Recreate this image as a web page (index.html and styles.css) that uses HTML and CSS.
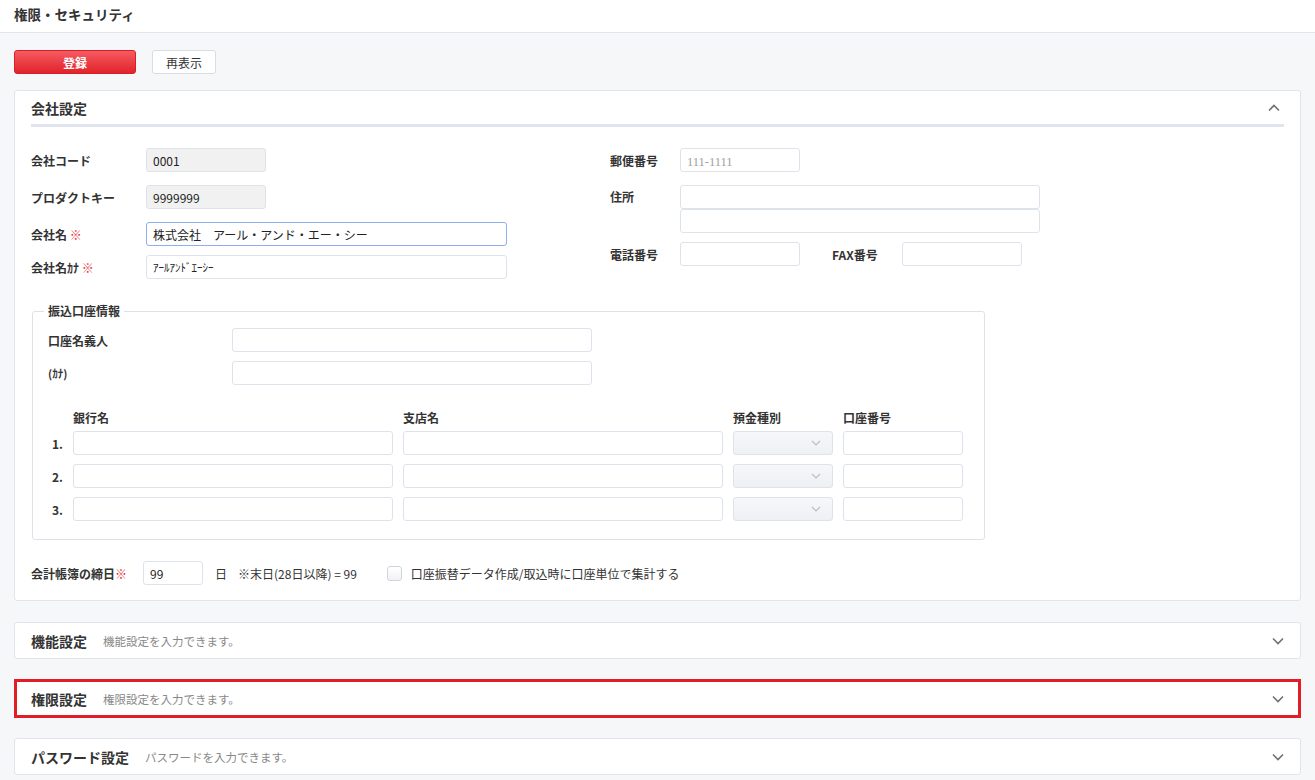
FILE: index.html
```html
<!DOCTYPE html>
<html lang="ja">
<head>
    <meta charset="UTF-8">
    <meta name="viewport" content="width=device-width, initial-scale=1.0">
    <title>権限・セキュリティ</title>
    <link rel="stylesheet" href="styles.css">
</head>
<body>
    <header class="page-header">権限・セキュリティ</header>

    <main class="content">
        <div class="toolbar">
            <button class="btn btn-primary">登録</button>
            <button class="btn btn-secondary">再表示</button>
        </div>

        <!-- 会社設定 -->
        <section class="card card-open">
            <div class="card-head">
                <h2 class="card-title">会社設定</h2>
                <svg class="chevron" width="12" height="8" viewBox="0 0 12 8"><path d="M1 6.5 6 1.5 11 6.5" /></svg>
            </div>

            <div class="card-body">
                <div class="company-grid">
                    <div class="col-left">
                        <div class="field-row">
                            <label class="label label-left">会社コード</label>
                            <input class="input input-s is-disabled" type="text" value="0001" readonly>
                        </div>
                        <div class="field-row">
                            <label class="label label-left">プロダクトキー</label>
                            <input class="input input-s is-disabled" type="text" value="9999999" readonly>
                        </div>
                        <div class="field-row row-tight">
                            <label class="label label-left">会社名 <span class="req">※</span></label>
                            <input class="input input-l is-focus" type="text" value="株式会社　アール・アンド・エー・シー">
                        </div>
                        <div class="field-row">
                            <label class="label label-left">会社名ｶﾅ <span class="req">※</span></label>
                            <input class="input input-l input-kana" type="text" value="ｱｰﾙｱﾝﾄﾞｴｰｼｰ">
                        </div>
                    </div>

                    <div class="col-right">
                        <div class="field-row">
                            <label class="label label-right">郵便番号</label>
                            <input class="input input-s input-zip" type="text" placeholder="111-1111">
                        </div>
                        <div class="field-row field-top">
                            <label class="label label-right">住所</label>
                            <div class="stack">
                                <input class="input input-addr" type="text">
                                <input class="input input-addr" type="text">
                            </div>
                        </div>
                        <div class="field-row">
                            <label class="label label-right">電話番号</label>
                            <input class="input input-s" type="text">
                            <label class="label label-right label-fax">FAX番号</label>
                            <input class="input input-s" type="text">
                        </div>
                    </div>
                </div>

                <fieldset class="bank-box">
                    <legend>振込口座情報</legend>
                    <div class="field-row row-tight">
                        <label class="label label-holder">口座名義人</label>
                        <input class="input input-holder" type="text">
                    </div>
                    <div class="field-row">
                        <label class="label label-holder label-thin">(ｶﾅ)</label>
                        <input class="input input-holder" type="text">
                    </div>

                    <div class="bank-grid">
                        <span></span>
                        <span class="col-head">銀行名</span>
                        <span class="col-head">支店名</span>
                        <span class="col-head">預金種別</span>
                        <span class="col-head">口座番号</span>

                        <span class="row-no">1.</span>
                        <input class="input" type="text">
                        <input class="input" type="text">
                        <div class="select"><svg width="10" height="6" viewBox="0 0 10 6"><path d="M1 1 5 5 9 1" /></svg></div>
                        <input class="input" type="text">

                        <span class="row-no">2.</span>
                        <input class="input" type="text">
                        <input class="input" type="text">
                        <div class="select"><svg width="10" height="6" viewBox="0 0 10 6"><path d="M1 1 5 5 9 1" /></svg></div>
                        <input class="input" type="text">

                        <span class="row-no">3.</span>
                        <input class="input" type="text">
                        <input class="input" type="text">
                        <div class="select"><svg width="10" height="6" viewBox="0 0 10 6"><path d="M1 1 5 5 9 1" /></svg></div>
                        <input class="input" type="text">
                    </div>
                </fieldset>

                <div class="closing-row">
                    <label class="label label-closing">会計帳簿の締日<span class="req">※</span></label>
                    <input class="input input-day" type="text" value="99">
                    <span class="unit">日</span>
                    <span class="note">※末日(28日以降) = 99</span>
                    <label class="check">
                        <span class="check-box"></span>
                        口座振替データ作成/取込時に口座単位で集計する
                    </label>
                </div>
            </div>
        </section>

        <section class="card card-closed">
            <h2 class="card-title">機能設定</h2>
            <span class="card-desc">機能設定を入力できます。</span>
            <svg class="chevron" width="12" height="8" viewBox="0 0 12 8"><path d="M1 1.5 6 6.5 11 1.5" /></svg>
        </section>

        <section class="card card-closed is-selected">
            <h2 class="card-title">権限設定</h2>
            <span class="card-desc">権限設定を入力できます。</span>
            <svg class="chevron" width="12" height="8" viewBox="0 0 12 8"><path d="M1 1.5 6 6.5 11 1.5" /></svg>
        </section>

        <section class="card card-closed">
            <h2 class="card-title">パスワード設定</h2>
            <span class="card-desc">パスワードを入力できます。</span>
            <svg class="chevron" width="12" height="8" viewBox="0 0 12 8"><path d="M1 1.5 6 6.5 11 1.5" /></svg>
        </section>
    </main>
</body>
</html>
```

FILE: styles.css
```css
* {
    box-sizing: border-box;
}

body {
    margin: 0;
    background-color: #f6f7f9;
    color: #333;
    font-family: "Noto Sans CJK JP", "Noto Sans", sans-serif;
    font-size: 12px;
}

.page-header {
    height: 33px;
    line-height: 29px;
    padding-left: 14px;
    background-color: #fff;
    border-bottom: 1px solid #e2e5ea;
    font-size: 13.5px;
    font-weight: bold;
    color: #333;
}

.content {
    padding: 17px 14px 0 14px;
}

/* buttons */
.toolbar {
    display: flex;
    gap: 16px;
}

.btn {
    height: 24px;
    border-radius: 3px;
    font-family: inherit;
    font-size: 12px;
    cursor: pointer;
}

.btn-primary {
    width: 122px;
    border: 1px solid #d91e26;
    background: linear-gradient(#f65a61, #e1232b);
    color: #fff;
    font-weight: bold;
}

.btn-secondary {
    width: 64px;
    border: 1px solid #d8dce3;
    background: #fff;
    color: #333;
}

/* cards */
.card {
    background-color: #fff;
    border: 1px solid #e0e4eb;
    border-radius: 3px;
    margin-top: 16px;
}

.card-title {
    margin: 0;
    font-size: 14px;
    font-weight: bold;
    color: #333;
}

.chevron path {
    fill: none;
    stroke: #707070;
    stroke-width: 1.6;
}

.card-head {
    display: flex;
    justify-content: space-between;
    align-items: center;
    height: 36px;
    margin: 0 16px;
    padding: 0 2px 0 0;
    border-bottom: 3px solid #dfe4ef;
}

.card-head .chevron {
    margin-right: 2px;
}

.card-body {
    padding: 21px 16px 15px 16px;
}

.card-closed {
    display: flex;
    align-items: center;
    height: 37px;
    margin-top: 20px;
    padding: 0 16px;
}

.card-open + .card-closed {
    margin-top: 21px;
}

.card-closed .card-desc {
    margin-left: 16px;
    font-size: 11.5px;
    color: #888;
}

.card-closed .chevron {
    margin-left: auto;
}

.card-closed.is-selected {
    height: 39px;
    border: 3px solid #e31d26;
    border-radius: 0;
    padding-left: 14px;
    padding-right: 14px;
}

/* form */
.company-grid {
    display: grid;
    grid-template-columns: 579px 1fr;
}

.field-row {
    display: flex;
    align-items: center;
    margin-bottom: 13px;
}

.field-row:last-child {
    margin-bottom: 0;
}

.field-row.row-tight {
    margin-bottom: 9px;
}

.field-row.field-top {
    align-items: flex-start;
    margin-bottom: 9px;
}

.field-top .label {
    line-height: 24px;
}

.label {
    font-weight: bold;
    font-size: 12px;
    color: #333;
}

.label-left {
    width: 115px;
}

.label-right {
    width: 70px;
}

.label-fax {
    margin-left: 32px;
}

.req {
    color: #e8303a;
}

.input {
    height: 24px;
    padding: 0 6px;
    border: 1px solid #dde2eb;
    border-radius: 3px;
    background-color: #fff;
    font-family: inherit;
    font-size: 12px;
    color: #222;
    outline: none;
}

.input-s {
    width: 120px;
}

.input-l {
    width: 361px;
}

.input-addr {
    display: block;
    width: 360px;
}

.is-disabled {
    background-color: #f1f1f1;
}

.is-focus {
    border: 1.5px solid #8db0ec;
}

.input-kana {
    font-size: 11px;
}

.input-zip::placeholder {
    font-family: "Liberation Serif", serif;
    font-size: 12.5px;
    color: #a0a0a0;
}

/* 振込口座情報 */
.bank-box {
    width: 953px;
    margin: 24px 0 0 1px;
    padding: 9px 16px 18px 15px;
    border: 1px solid #dde2ea;
    border-radius: 3px;
}

.bank-box legend {
    margin-left: -4px;
    padding: 0 4px;
    font-weight: bold;
    font-size: 12px;
    line-height: 16px;
    color: #333;
}

.label-holder {
    width: 184px;
}

.label-thin {
    font-size: 11px;
}

.input-holder {
    width: 360px;
}

.bank-grid {
    display: grid;
    grid-template-columns: 15px 320px 320px 100px 120px;
    column-gap: 10px;
    row-gap: 9px;
    margin-top: 25px;
}

.col-head {
    font-weight: bold;
    line-height: 16px;
    margin-bottom: -4px;
}

.row-no {
    align-self: center;
    text-align: right;
    font-weight: bold;
}

.select {
    display: flex;
    align-items: center;
    justify-content: flex-end;
    height: 24px;
    padding-right: 11px;
    border: 1px solid #dde2eb;
    border-radius: 3px;
    background: linear-gradient(#f6f7f9, #eef0f3);
}

.select path {
    fill: none;
    stroke: #b9bec8;
    stroke-width: 1.2;
}

/* 締日 */
.closing-row {
    display: flex;
    align-items: center;
    margin-top: 21px;
}

.label-closing {
    width: 112px;
}

.input-day {
    width: 60px;
}

.unit {
    margin-left: 12px;
}

.note {
    margin-left: 11px;
}

.check {
    display: flex;
    align-items: center;
    margin-left: 30px;
    gap: 9px;
}

.check-box {
    width: 15px;
    height: 15px;
    border: 1px solid #cfd4dc;
    border-radius: 3px;
    background: linear-gradient(#fff, #f1f2f4);
}
```
